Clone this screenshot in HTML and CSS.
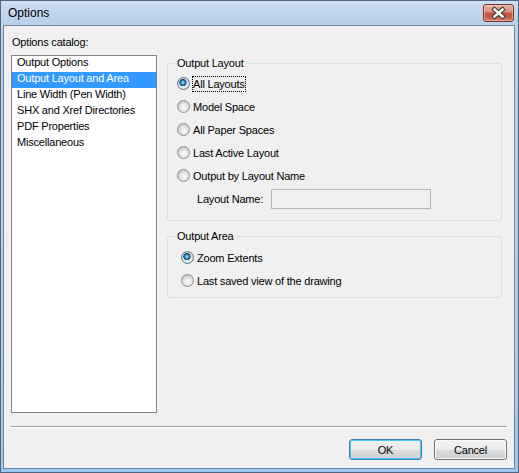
FILE: index.html
```html
<!DOCTYPE html>
<html>
<head>
<meta charset="utf-8">
<title>Options</title>
<link rel="stylesheet" href="styles.css">
</head>
<body>
<div class="window">
  <div class="titlebar">
    <span class="title">Options</span>
    <button class="close" aria-label="Close">
      <svg width="31" height="18" viewBox="0 0 31 18">
        <path d="M11.5 5.5 L19.5 12.5 M19.5 5.5 L11.5 12.5" stroke="#3f3f3f" stroke-width="4.6" stroke-linecap="square" fill="none"/>
        <path d="M11.5 5.5 L19.5 12.5 M19.5 5.5 L11.5 12.5" stroke="#ffffff" stroke-width="2.4" stroke-linecap="square" fill="none"/>
      </svg>
    </button>
  </div>
  <div class="client">
    <div class="main">
      <div class="catalog">
        <div class="label">Options catalog:</div>
        <ul class="listbox">
          <li>Output Options</li>
          <li class="selected">Output Layout and Area</li>
          <li>Line Width (Pen Width)</li>
          <li>SHX and Xref Directories</li>
          <li>PDF Properties</li>
          <li>Miscellaneous</li>
        </ul>
      </div>
      <div class="panel">
        <fieldset class="group layout">
          <legend>Output Layout</legend>
          <div class="radio-row"><span class="radio checked"></span><span class="text focus">All Layouts</span></div>
          <div class="radio-row"><span class="radio"></span><span class="text">Model Space</span></div>
          <div class="radio-row"><span class="radio"></span><span class="text">All Paper Spaces</span></div>
          <div class="radio-row"><span class="radio"></span><span class="text">Last Active Layout</span></div>
          <div class="radio-row"><span class="radio"></span><span class="text">Output by Layout Name</span></div>
          <div class="name-row"><span class="name-label">Layout Name:</span><span class="input"></span></div>
        </fieldset>
        <fieldset class="group area">
          <legend>Output Area</legend>
          <div class="radio-row"><span class="radio checked"></span><span class="text">Zoom Extents</span></div>
          <div class="radio-row"><span class="radio"></span><span class="text">Last saved view of the drawing</span></div>
        </fieldset>
      </div>
    </div>
    <div class="separator"></div>
    <div class="buttons">
      <button class="btn default">OK</button>
      <button class="btn">Cancel</button>
    </div>
  </div>
</div>
</body>
</html>
```
FILE: styles.css
```css
html, body {
  margin: 0;
  padding: 0;
}
body {
  width: 519px;
  height: 473px;
  overflow: hidden;
  font-family: "Liberation Sans", Arial, sans-serif;
  font-size: 11px;
  letter-spacing: -0.2px;
  color: #000;
  background: #fff;
}
.window {
  box-sizing: border-box;
  width: 519px;
  height: 473px;
  border: 1px solid #4f6784;
  background: linear-gradient(#cadcf0, #bad1ea 30px, #b3cdea 70%, #9fc6ec);
  display: flex;
  flex-direction: column;
}
.titlebar {
  height: 24px;
  flex: none;
  display: flex;
  align-items: center;
  background: linear-gradient(#d0e0f2, #c0d5ec 50%, #b9cfe9);
}
.title {
  padding-left: 7px;
  font-size: 12px;
  letter-spacing: 0;
  line-height: 16px;
  flex: 1;
  color: #000;
}
.close {
  align-self: flex-start;
  margin: 3px 4px 0 0;
  width: 31px;
  height: 18px;
  padding: 0;
  box-sizing: border-box;
  border: 1px solid #7a3427;
  border-radius: 3px;
  background: linear-gradient(#e6b0a2 0%, #db9483 40%, #c6523e 52%, #c85a44 75%, #d9846a 100%);
  box-shadow: inset 0 0 0 1px rgba(255, 220, 210, 0.45);
  display: flex;
  align-items: center;
  justify-content: center;
}
.close svg {
  display: block;
  margin: -1px;
}
.client {
  flex: 1;
  margin: 0 3px 3px 2px;
  border: 1px solid #6f86a3;
  background: #f0f0f0;
  padding: 9px 7px 8px 7px;
  display: flex;
  flex-direction: column;
}
.main {
  display: flex;
  gap: 10px;
  height: 378px;
  flex: none;
}
.catalog {
  width: 146px;
  display: flex;
  flex-direction: column;
}
.label {
  line-height: 14px;
  height: 14px;
  margin-bottom: 6px;
  padding-left: 1px;
}
.listbox {
  list-style: none;
  margin: 0;
  padding: 0;
  box-sizing: border-box;
  height: 358px;
  border: 1px solid #828790;
  background: #fff;
}
.listbox li {
  height: 16px;
  line-height: 13px;
  padding-left: 5px;
  white-space: nowrap;
}
.listbox li.selected {
  background: #3399ff;
  color: #fff;
}
.panel {
  width: 335px;
  margin-top: 21px;
}
.group {
  margin: 0;
  min-width: 0;
  border: 1px solid #d5dfe5;
  border-radius: 3px;
  padding: 1px 8px 11px 7px;
}
.group legend {
  padding: 0 2px;
  line-height: 15px;
  font-size: 11px;
}
.group.area {
  margin-top: 8px;
  padding-top: 2px;
  padding-bottom: 5px;
}
.radio-row {
  height: 23px;
  display: flex;
  align-items: center;
}
.radio {
  flex: none;
  width: 13px;
  height: 13px;
  box-sizing: border-box;
  border-radius: 50%;
  border: 1px solid #8e8f8f;
  background: radial-gradient(circle at 55% 60%, #fbfbfb 0, #ececec 2.5px, #d6d6d6 5.5px, #cbcbcb 6px);
  margin-left: 2px;
  margin-right: 2px;
}
.area .radio {
  margin-left: 6px;
}
.radio.checked {
  border-color: #5e7a92;
  background:
    radial-gradient(circle at 45% 42%, #c9ecff 0, #4aa8de 1.4px, #1a6aa0 2.6px, #0d426e 3.3px, rgba(13, 66, 110, 0) 3.9px),
    radial-gradient(circle at 55% 60%, #fbfbfb 0, #ececec 2.5px, #d6d6d6 5.5px, #cbcbcb 6px);
}
.text {
  line-height: 14px;
  padding: 1px;
  white-space: nowrap;
}
.text.focus {
  outline: 1px dotted #000;
  outline-offset: -1px;
}
.name-row {
  display: flex;
  align-items: center;
  margin-top: 2px;
  padding-left: 22px;
  height: 20px;
}
.name-label {
  width: 74px;
  flex: none;
  line-height: 14px;
}
.input {
  box-sizing: border-box;
  width: 160px;
  height: 20px;
  border: 1px solid #b4b8bc;
  background: #f0f0f0;
}
.separator {
  margin-top: 13px;
  height: 0;
  border-top: 1px solid #a0a0a0;
  border-bottom: 1px solid #ffffff;
  flex: none;
}
.buttons {
  margin-top: 11px;
  display: flex;
  justify-content: flex-end;
  gap: 12px;
}
.btn {
  width: 73px;
  height: 21px;
  padding: 0;
  box-sizing: border-box;
  font-family: "Liberation Sans", Arial, sans-serif;
  font-size: 11px;
  letter-spacing: -0.2px;
  color: #000;
  border: 1px solid #707070;
  border-radius: 3px;
  background: linear-gradient(#f2f2f2 0%, #ebebeb 50%, #dddddd 51%, #cfcfcf 100%);
  box-shadow: inset 0 0 0 1px #fcfcfc;
}
.btn.default {
  border-color: #3c7fb1;
  box-shadow: inset 0 0 0 1px #48c6f4;
}
```
